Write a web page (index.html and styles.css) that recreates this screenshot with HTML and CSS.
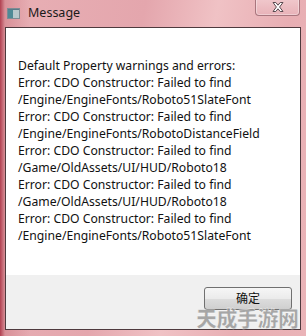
FILE: index.html
```html
<!DOCTYPE html>
<html>
<head>
<meta charset="utf-8">
<link rel="stylesheet" href="styles.css">
</head>
<body>
<div class="window">
  <div class="titlebar">
    <svg class="app-icon" width="13" height="11" viewBox="0 0 13 11">
      <rect x="0.5" y="0.5" width="12" height="10" fill="#e8eef0" stroke="#7c8c94"/>
      <rect x="1" y="2" width="5" height="8" fill="#4e8a96"/>
      <rect x="6" y="2" width="6" height="8" fill="#b8c8cc"/>
      <rect x="1" y="1" width="11" height="1" fill="#5a7a88"/>
    </svg>
    <span class="title">Message</span>
    <div class="close">
      <svg width="16" height="12" viewBox="0 0 16 12">
        <path d="M3 1.5 L5.8 1.5 L8 4.2 L10.2 1.5 L13 1.5 L9.6 6 L13 10.5 L10.2 10.5 L8 7.8 L5.8 10.5 L3 10.5 L6.4 6 Z" fill="#ffffff" stroke="#5a4a50" stroke-width="1" stroke-linejoin="round"/>
      </svg>
    </div>
  </div>
  <div class="client">
    <div class="content">
      <p class="msg">Default Property warnings and errors:<br>Error: CDO Constructor: Failed to find<br>/Engine/EngineFonts/Roboto51SlateFont<br>Error: CDO Constructor: Failed to find<br>/Engine/EngineFonts/RobotoDistanceField<br>Error: CDO Constructor: Failed to find<br>/Game/OldAssets/UI/HUD/Roboto18<br>Error: CDO Constructor: Failed to find<br>/Game/OldAssets/UI/HUD/Roboto18<br>Error: CDO Constructor: Failed to find<br>/Engine/EngineFonts/Roboto51SlateFont</p>
    </div>
    <div class="footer">
      <button class="ok">确定</button>
    </div>
  </div>
  <div class="watermark">天成手游网</div>
</div>
</body>
</html>
```
FILE: styles.css
```css
html, body {
  margin: 0;
  padding: 0;
}
body {
  width: 306px;
  height: 336px;
  overflow: hidden;
}
.window {
  position: relative;
  width: 306px;
  height: 336px;
  box-sizing: border-box;
  display: flex;
  flex-direction: column;
  background:
    linear-gradient(90deg, #b04050 0px, #d89098 5px, rgba(232,176,180,0) 30px),
    linear-gradient(100deg, #e8b0b5 0%, #e4a6ad 40%, #f0c2c5 60%, #e8aeb3 80%, #eab4b8 100%);
  font-family: "Noto Sans", "Noto Sans CJK SC", sans-serif;
}
.titlebar {
  height: 27px;
  display: flex;
  align-items: flex-start;
  flex-shrink: 0;
}
.app-icon {
  margin: 8px 0 0 7px;
}
.title {
  margin: 4px 0 0 8px;
  font-size: 12.5px;
  color: #1a1a1a;
  line-height: 18px;
}
.close {
  margin-left: auto;
  margin-right: 6px;
  margin-top: -1px;
  width: 45px;
  height: 17px;
  box-sizing: border-box;
  border: 1px solid #a8767e;
  border-top: none;
  border-radius: 0 0 4px 4px;
  background: linear-gradient(#f0c8cc, #e8b2b8);
  box-shadow: inset 0 0 0 1px rgba(255,255,255,0.35);
  display: flex;
  align-items: center;
  justify-content: center;
}
.client {
  flex: 1;
  margin: 0 5px 6px 5px;
  border: 1px solid #4e3a3e;
  display: flex;
  flex-direction: column;
  background: #f0f0f0;
}
.content {
  background: #ffffff;
  height: 247px;
  padding: 29px 12px 0 12px;
  box-sizing: border-box;
}
.msg {
  margin: 0;
  font-size: 12.2px;
  line-height: 17px;
  color: #111111;
  white-space: nowrap;
}
.footer {
  flex: 1;
  display: flex;
  justify-content: flex-end;
  align-items: flex-start;
  padding: 12px 8px 0 0;
}
.ok {
  width: 88px;
  height: 23px;
  border: 1px solid #707070;
  border-radius: 3px;
  background: linear-gradient(#f6f6f6 0%, #ebebeb 50%, #dddddd 51%, #cfcfcf 100%);
  font-family: "Noto Sans CJK SC", sans-serif;
  font-size: 12px;
  line-height: 13px;
  color: #111;
  padding: 0 0 2px 0;
}
.watermark {
  position: absolute;
  left: 196px;
  top: 308px;
  font-family: "Noto Sans CJK SC", sans-serif;
  font-weight: 900;
  font-size: 21px;
  line-height: 19px;
  color: #9a9a9a;
  letter-spacing: -0.5px;
  opacity: 0.85;
  -webkit-text-stroke: 0.4px #ffffff;
}
```
